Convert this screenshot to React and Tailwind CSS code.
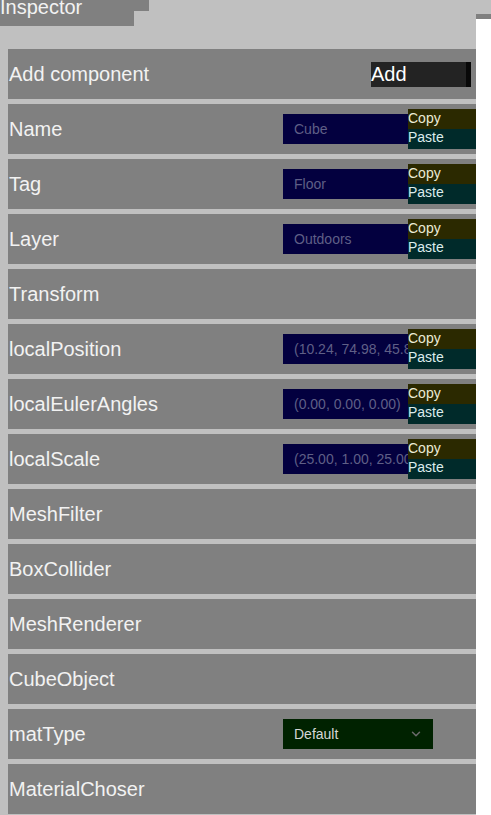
import { ChevronDown } from "lucide-react";

const rows = [
  { label: "Add component", kind: "add" },
  { label: "Name", kind: "field", value: "Cube" },
  { label: "Tag", kind: "field", value: "Floor" },
  { label: "Layer", kind: "field", value: "Outdoors" },
  { label: "Transform" },
  { label: "localPosition", kind: "field", value: "(10.24, 74.98, 45.81)" },
  { label: "localEulerAngles", kind: "field", value: "(0.00, 0.00, 0.00)" },
  { label: "localScale", kind: "field", value: "(25.00, 1.00, 25.00)" },
  { label: "MeshFilter" },
  { label: "BoxCollider" },
  { label: "MeshRenderer" },
  { label: "CubeObject" },
  { label: "matType", kind: "select", value: "Default" },
  { label: "MaterialChoser" },
];

const CopyPaste = () => (
  <div className="flex w-[68px] flex-col text-[14px]">
    <div className="h-[20px] bg-[#2b2900] leading-[18px] text-[#ecebd6]">Copy</div>
    <div className="h-[20px] bg-[#002a2a] leading-[16px] text-[#dcecec]">Paste</div>
  </div>
);

const Row = ({ row }) => (
  <div className="flex h-[50px] items-center bg-[#808080] pl-[1px]">
    <span className="flex-1 text-[20px] text-[#f2f2f2]">{row.label}</span>
    {row.kind === "add" && (
      <div className="mr-[5px] flex h-[25px] w-[100px] items-center bg-[#232323]">
        <span className="flex-1 text-[20px] leading-[25px] text-white">Add</span>
        <div className="h-full w-[5px] bg-[#080808]" />
      </div>
    )}
    {row.kind === "field" && (
      <div className="flex items-center">
        <div className="h-[30px] w-[125px] overflow-hidden whitespace-nowrap bg-[#03003f] pl-[11px] text-[14px] leading-[30px] text-[#5f5f86]">
          {row.value}
        </div>
        <CopyPaste />
      </div>
    )}
    {row.kind === "select" && (
      <div className="mr-[43px] flex h-[30px] w-[150px] items-center justify-between bg-[#002200] pl-[11px] pr-[10px] text-[14px] text-[#d6d6d6]">
        <span>{row.value}</span>
        <ChevronDown className="h-[14px] w-[14px] text-[#6b6b6b]" strokeWidth={2.5} />
      </div>
    )}
  </div>
);

export default function App() {
  return (
    <div className="relative h-[815px] w-[491px] overflow-hidden bg-white font-['Liberation_Sans',Arial,sans-serif]">
      <div className="h-[14px] bg-[#c0c0c0]" />
      <div className="flex">
        <div className="flex w-[476px] flex-col gap-[5px] bg-[#c0c0c0] pb-[10px] pl-[8px] pt-[35px]">
          {rows.map((row) => (
            <Row key={row.label} row={row} />
          ))}
        </div>
        <div className="flex-1">
          <div className="h-[5px] bg-[#808080]" />
        </div>
      </div>

      {/* inspector tab sits over the panel */}
      <div className="absolute left-0 top-0">
        <div className="h-[11px] w-[149px] bg-[#808080]" />
        <div className="h-[15px] w-[134px] bg-[#808080]" />
        <span className="absolute left-0 top-[-4px] text-[20px] leading-[23px] text-[#f2f2f2]">
          Inspector
        </span>
      </div>
    </div>
  );
}
